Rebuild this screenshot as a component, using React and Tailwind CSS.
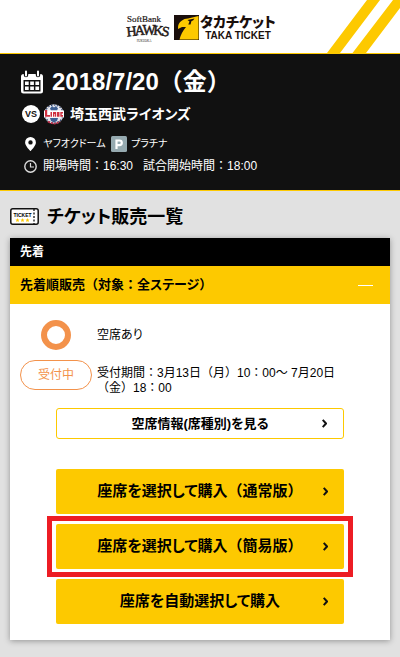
import React from "react";

/* Sets runs of kana proportionally and leaves kanji and punctuation full width. */
function Jp({ children }) {
  return children.split(/([ぁ-んァ-ヶー]+)/).map((part, i) =>
    i % 2 ? (
      <span key={i} className="[font-feature-settings:'palt']">
        {part}
      </span>
    ) : (
      part
    )
  );
}

function Chevron() {
  return (
    <svg className="absolute right-4 top-1/2 -mt-[5px]" width="5" height="9" viewBox="0 0 5 9" fill="none" stroke="#111" strokeWidth="2" aria-hidden="true">
      <path d="M.7.8 4 4.500.7 8.200" />
    </svg>
  );
}

function BuyButton({ children }) {
  return (
    <button type="button" className="relative flex h-[45px] w-full items-center justify-center rounded-xs bg-[#fdc900] text-[15px] font-bold text-black">
      <span>
        <Jp>{children}</Jp>
      </span>
      <Chevron />
    </button>
  );
}

function Header() {
  return (
    <header className="relative flex h-[54px] justify-center gap-1 overflow-hidden border-b border-[#fdc900] bg-white pt-[14px]">
      <svg className="overflow-visible" width="44" height="28" viewBox="0 0 44 28" fill="#231815" role="img" aria-label="SoftBank HAWKS">
        <g fontFamily="Liberation Serif, serif" textAnchor="middle" stroke="#231815">
          <text x="18" y="8" fontSize="9" strokeWidth=".2">SoftBank</text>
          <g fontSize="14" strokeWidth=".5">
            <text x="6" y="22" transform="rotate(-6 6 22)">H</text>
            <text x="14" y="21" transform="rotate(-3 14 21)">A</text>
            <text x="23" y="21">W</text>
            <text x="32" y="21" transform="rotate(4 32 21)">K</text>
            <text x="39" y="22" transform="rotate(8 39 22)">S</text>
          </g>
          <text x="18" y="28" fontSize="3" stroke="none">FUKUOKA</text>
        </g>
      </svg>
      <div className="flex gap-[3px] pt-px">
        <svg width="25" height="25" viewBox="0 0 25 25" aria-hidden="true">
          <path fill="#1a0f0c" d="M0 0h25v25H0z" />
          <path fill="#fdc900" d="M24.500 1v23.500H5.500Q7 18 12 12H8l-4 2Q3.500 8 8 5.500 10 3.500 14 3.500z" />
          <path fill="#1a0f0c" d="m13.500 5 7-1.500L19 5.500l-1.500.5L16.500 9.500h-2.200L15.500 6.500z" />
        </svg>
        <div className="flex w-[72px] flex-col items-center text-[#1a0f0c]">
          <span className="whitespace-nowrap text-sm/[15px] font-black">
            <Jp>タカチケット</Jp>
          </span>
          <span className="whitespace-nowrap font-['Liberation_Sans',sans-serif] text-[10px]/[12px] font-bold">TAKA TICKET</span>
        </div>
      </div>
      <svg className="absolute right-0 top-0" width="73" height="53" viewBox="0 0 73 53" fill="#fdc900" aria-hidden="true">
        <path d="M40 0h13L13 53H0zM66 0h13L39 53H25.500z" />
      </svg>
    </header>
  );
}

function GameInfo() {
  return (
    <section className="h-[137px] border-b border-[#fdc900] bg-[#111] px-5 pt-3 text-white">
      <h1 className="flex h-8 items-center gap-2 whitespace-nowrap text-2xl font-bold">
        <svg width="24" height="24" viewBox="0 0 24 24" fill="none" aria-hidden="true">
          <rect x="1" y="4" width="22" height="19.500" rx="2.500" fill="#fff" />
          <path stroke="#111" strokeWidth="4.500" strokeLinecap="round" d="M6 2v3M18 2v3" />
          <path stroke="#fff" strokeWidth="2" strokeLinecap="round" d="M6 1.500v4M18 1.500v4" />
          <path fill="#111" d="M3.500 10h17v11.500h-17z" />
          <path fill="#fff" d="M5 11.500h3.700V15H5zM10.200 11.500h3.700V15h-3.700zM15.400 11.500h3.700V15h-3.700zM5 16.500h3.700V20H5zM10.200 16.500h3.700V20h-3.700zM15.400 16.500h3.700V20h-3.700z" />
        </svg>
        2018/7/20（金）
      </h1>
      <p className="mt-1 flex h-6 items-center gap-1 whitespace-nowrap text-sm font-bold">
        <svg className="ml-[2px]" width="18" height="18" viewBox="0 0 18 18" role="img" aria-label="VS">
          <circle cx="9" cy="9" r="9" fill="#fff" />
          <text x="9" y="12" fontSize="9" fontWeight="bold" fontFamily="Liberation Sans, sans-serif" textAnchor="middle" fill="#111">VS</text>
        </svg>
        <svg className="mr-[2px]" width="20" height="22" viewBox="0 0 20 22" aria-hidden="true">
          <circle cx="10" cy="11" r="9.800" fill="#e8e9ef" />
          <circle cx="10" cy="11" r="9" fill="none" stroke="#263c68" strokeWidth="1.200" strokeDasharray="1.500 1.500" />
          <path d="M4 18.500q6 4 12 0" fill="none" stroke="#c8304a" strokeWidth="1.800" strokeDasharray="2 1" />
          <path d="M6 5.500 8 3l2 1.500L12 3l2 2.500-1 2H7z" fill="#3e5f93" />
          <path d="M6 15h8l-1 3-3 1.500L7 18z" fill="#3e5f93" />
          <path fill="#fff" d="M0 7.500h20v7H0z" />
          <path d="M1 7h2.200v5H6v1.800H1zM6.500 9H8v4.800H6.500zM9 9h3.200v4.800H11V11h-.6v2.800H9zM13 9h2.500v4.800H13zM16.300 9H19v1.500h-1.300V12H19v1.800h-2.700z" fill="#cf2f3f" />
        </svg>
        <span>
          <Jp>埼玉西武ライオンズ</Jp>
        </span>
      </p>
      <p className="mt-[6px] flex h-6 items-center whitespace-nowrap text-xs">
        <svg className="ml-[5px] mr-[7px]" width="11" height="14" viewBox="0 0 11 14" aria-hidden="true">
          <path fill="#fff" fillRule="evenodd" d="M5.500 0A5.400 5.400 0 0 0 .1 5.400C.1 9 5.500 14 5.500 14s5.400-5 5.400-8.600A5.400 5.400 0 0 0 5.500 0m0 3.200a2.200 2.200 0 1 1 0 4.400 2.200 2.200 0 0 1 0-4.400" />
        </svg>
        <span className="w-[68px] text-[10px]">
          <Jp>ヤフオクドーム</Jp>
        </span>
        <svg className="mr-1" width="16" height="16" viewBox="0 0 16 16" aria-hidden="true">
          <rect width="16" height="16" rx="1.500" fill="#96aab0" />
          <path d="M5.500 13V4.500h3a2.300 2.300 0 0 1 0 4.600h-3" fill="none" stroke="#fff" strokeWidth="2.200" />
        </svg>
        <span className="text-[10px]">
          <Jp>プラチナ</Jp>
        </span>
      </p>
      <p className="flex h-5 items-center whitespace-nowrap text-xs">
        <svg className="ml-1 mr-[6px]" width="13" height="13" viewBox="0 0 13 13" fill="none" stroke="#ddd" aria-hidden="true">
          <circle cx="6.500" cy="6.500" r="5.700" strokeWidth="1.400" />
          <path d="M6.500 3v4H10" strokeWidth="1.200" />
        </svg>
        <span>開場時間：16:30</span>
        <span className="ml-[10px]">試合開始時間：18:00</span>
      </p>
    </section>
  );
}

export default function App() {
  return (
    <div className="min-h-screen bg-[#e1e1e1] font-['Liberation_Sans','Noto_Sans_CJK_JP',sans-serif] text-black">
      <Header />
      <GameInfo />
      <main className="px-[10px] pb-[17px]">
        <h2 className="flex h-[47px] items-center gap-2 whitespace-nowrap pt-1 text-lg font-bold">
          <svg width="29" height="17" viewBox="0 0 29 17" aria-hidden="true">
            <rect x=".8" y=".8" width="27.400" height="15.400" rx="2" fill="#fff" stroke="#111" strokeWidth="1.500" />
            <path d="M24 1v15" stroke="#111" strokeWidth="1.300" strokeDasharray="2 1.500" />
            <text x="12.500" y="8.500" textAnchor="middle" fontSize="5" fontWeight="bold" fontFamily="Liberation Sans, sans-serif">TICKET</text>
            <path fill="#fdc900" d="m7.500 10 .6 1.400 1.500.1-1.100 1 .3 1.500-1.300-.8-1.300.8.300-1.500-1.100-1 1.500-.1zM12.500 10l.6 1.400 1.500.1-1.100 1 .3 1.500-1.300-.8-1.300.8.300-1.500-1.100-1 1.500-.1zM17.500 10l.6 1.400 1.500.1-1.100 1 .3 1.500-1.300-.8-1.300.8.300-1.500-1.100-1 1.500-.1z" />
          </svg>
          <span>
            <Jp>チケット販売一覧</Jp>
          </span>
        </h2>
        <section className="bg-white pb-4 shadow-[0_1px_6px_rgba(0,0,0,0.35)]">
          <p className="flex h-7 items-center bg-black px-[10px] text-xs font-bold text-white">先着</p>
          <button type="button" aria-expanded="true" className="flex h-[38px] w-full items-center justify-between bg-[#fdc900] pl-[10px] pr-[17px] text-[13px] font-bold">
            <span>
              <Jp>先着順販売（対象：全ステージ）</Jp>
            </span>
            <span className="h-px w-[15px] bg-white" />
          </button>
          <div className="grid grid-cols-[72px_1fr] gap-x-[5px] gap-y-[10px] pl-[10px] pr-7 pt-4 text-xs/[15px]">
            <svg className="justify-self-center" width="30" height="30" viewBox="0 0 30 30" aria-hidden="true">
              <circle cx="15" cy="15" r="12" fill="none" stroke="#f3924b" strokeWidth="6" />
            </svg>
            <p className="self-center">
              <Jp>空席あり</Jp>
            </p>
            <p className="flex h-[30px] items-center justify-center rounded-full border border-[#f3924b] text-[#f3924b]">受付中</p>
            <p className="pt-[6px]">受付期間：3月13日（月）10：00〜 7月20日（金）18：00</p>
          </div>
          <div className="flex flex-col gap-[10px] px-[46px] pt-3">
            <button type="button" className="relative mb-5 flex h-[31px] w-full items-center justify-center rounded-[3px] border border-[#fdc900] bg-white text-[13px] font-bold">
              <span>
                <Jp>空席情報(席種別)を見る</Jp>
              </span>
              <Chevron />
            </button>
            <BuyButton>座席を選択して購入（通常版）</BuyButton>
            <div className="relative">
              <BuyButton>座席を選択して購入（簡易版）</BuyButton>
              <div className="pointer-events-none absolute -inset-x-[9px] -inset-y-2 border-[5px] border-[#ed1c24]" />
            </div>
            <BuyButton>座席を自動選択して購入</BuyButton>
          </div>
        </section>
      </main>
    </div>
  );
}
